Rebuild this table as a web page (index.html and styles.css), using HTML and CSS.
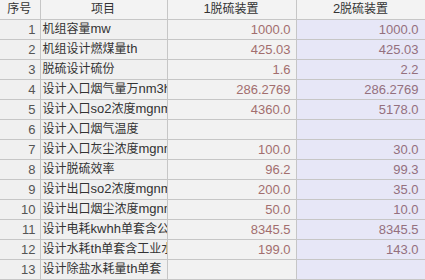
FILE: index.html
```html
<!DOCTYPE html>
<html>
<head>
<meta charset="utf-8">
<link rel="stylesheet" href="styles.css">
</head>
<body>
<table class="grid">
<colgroup>
<col class="c-no"><col class="c-name"><col class="c-v1"><col class="c-v2">
</colgroup>
<thead>
<tr><th>序号</th><th>项目</th><th><span class="lat">1</span>脱硫装置</th><th><span class="lat">2</span>脱硫装置</th></tr>
</thead>
<tbody>
<tr><td class="no">1</td><td class="name">机组容量<span class="lat">mw</span></td><td class="v1">1000.0</td><td class="v2">1000.0</td></tr>
<tr><td class="no">2</td><td class="name">机组设计燃煤量<span class="lat">th</span></td><td class="v1">425.03</td><td class="v2">425.03</td></tr>
<tr><td class="no">3</td><td class="name">脱硫设计硫份</td><td class="v1">1.6</td><td class="v2">2.2</td></tr>
<tr><td class="no">4</td><td class="name">设计入口烟气量万<span class="lat">nm3h</span></td><td class="v1">286.2769</td><td class="v2">286.2769</td></tr>
<tr><td class="no">5</td><td class="name">设计入口<span class="lat">so2</span>浓度<span class="lat">mgnm3</span></td><td class="v1">4360.0</td><td class="v2">5178.0</td></tr>
<tr><td class="no">6</td><td class="name">设计入口烟气温度</td><td class="v1"></td><td class="v2"></td></tr>
<tr><td class="no">7</td><td class="name">设计入口灰尘浓度<span class="lat">mgnm3</span></td><td class="v1">100.0</td><td class="v2">30.0</td></tr>
<tr><td class="no">8</td><td class="name">设计脱硫效率</td><td class="v1">96.2</td><td class="v2">99.3</td></tr>
<tr><td class="no">9</td><td class="name">设计出口<span class="lat">so2</span>浓度<span class="lat">mgnm3</span></td><td class="v1">200.0</td><td class="v2">35.0</td></tr>
<tr><td class="no">10</td><td class="name">设计出口烟尘浓度<span class="lat">mgnm3</span></td><td class="v1">50.0</td><td class="v2">10.0</td></tr>
<tr><td class="no">11</td><td class="name">设计电耗<span class="lat">kwhh</span>单套含公用</td><td class="v1">8345.5</td><td class="v2">8345.5</td></tr>
<tr><td class="no">12</td><td class="name">设计水耗<span class="lat">th</span>单套含工业水</td><td class="v1">199.0</td><td class="v2">143.0</td></tr>
<tr><td class="no">13</td><td class="name">设计除盐水耗量<span class="lat">th</span>单套</td><td class="v1"></td><td class="v2"></td></tr>
</tbody>
</table>
</body>
</html>
```
FILE: styles.css
```css
html, body {
  margin: 0;
  padding: 0;
  background: #ffffff;
}
.grid {
  border-collapse: collapse;
  table-layout: fixed;
  width: 426px;
  font-family: "Liberation Sans", Arial, "Noto Sans CJK SC", sans-serif;
  font-size: 13px;
  color: #333333;
}
.c-no { width: 40px; }
.c-name { width: 127px; }
.c-v1 { width: 129px; }
.c-v2 { width: 130px; }
.grid th, .grid td {
  height: 19px;
  padding: 1px 5px 1px 4px;
  border: 1px solid #c6c6c6;
  white-space: nowrap;
  overflow: hidden;
  line-height: 17px;
  box-sizing: border-box;
}
.grid thead tr:first-child th { border-top: none; }
.grid tr > :first-child { border-left: none; }
.grid th {
  font-weight: normal;
  font-size: 12px;
  background: #f3f3f3;
  text-align: center;
  color: #333333;
}
.grid td {
  background: #f0f0f0;
}
.lat {
  font-size: 13px;
  line-height: 1;
}
.grid td.no {
  text-align: right;
  color: #555555;
  padding-right: 4px;
}
.grid td.name {
  font-size: 12px;
  text-align: left;
  padding-left: 2px;
  padding-right: 0;
  text-overflow: clip;
}
.grid td.v1 {
  text-align: right;
  color: #a26e6e;
  background: #f2f2f2;
}
.grid td.v2 {
  text-align: right;
  color: #94707e;
  background: #e7e7f7;
  padding-right: 7px;
}
```
